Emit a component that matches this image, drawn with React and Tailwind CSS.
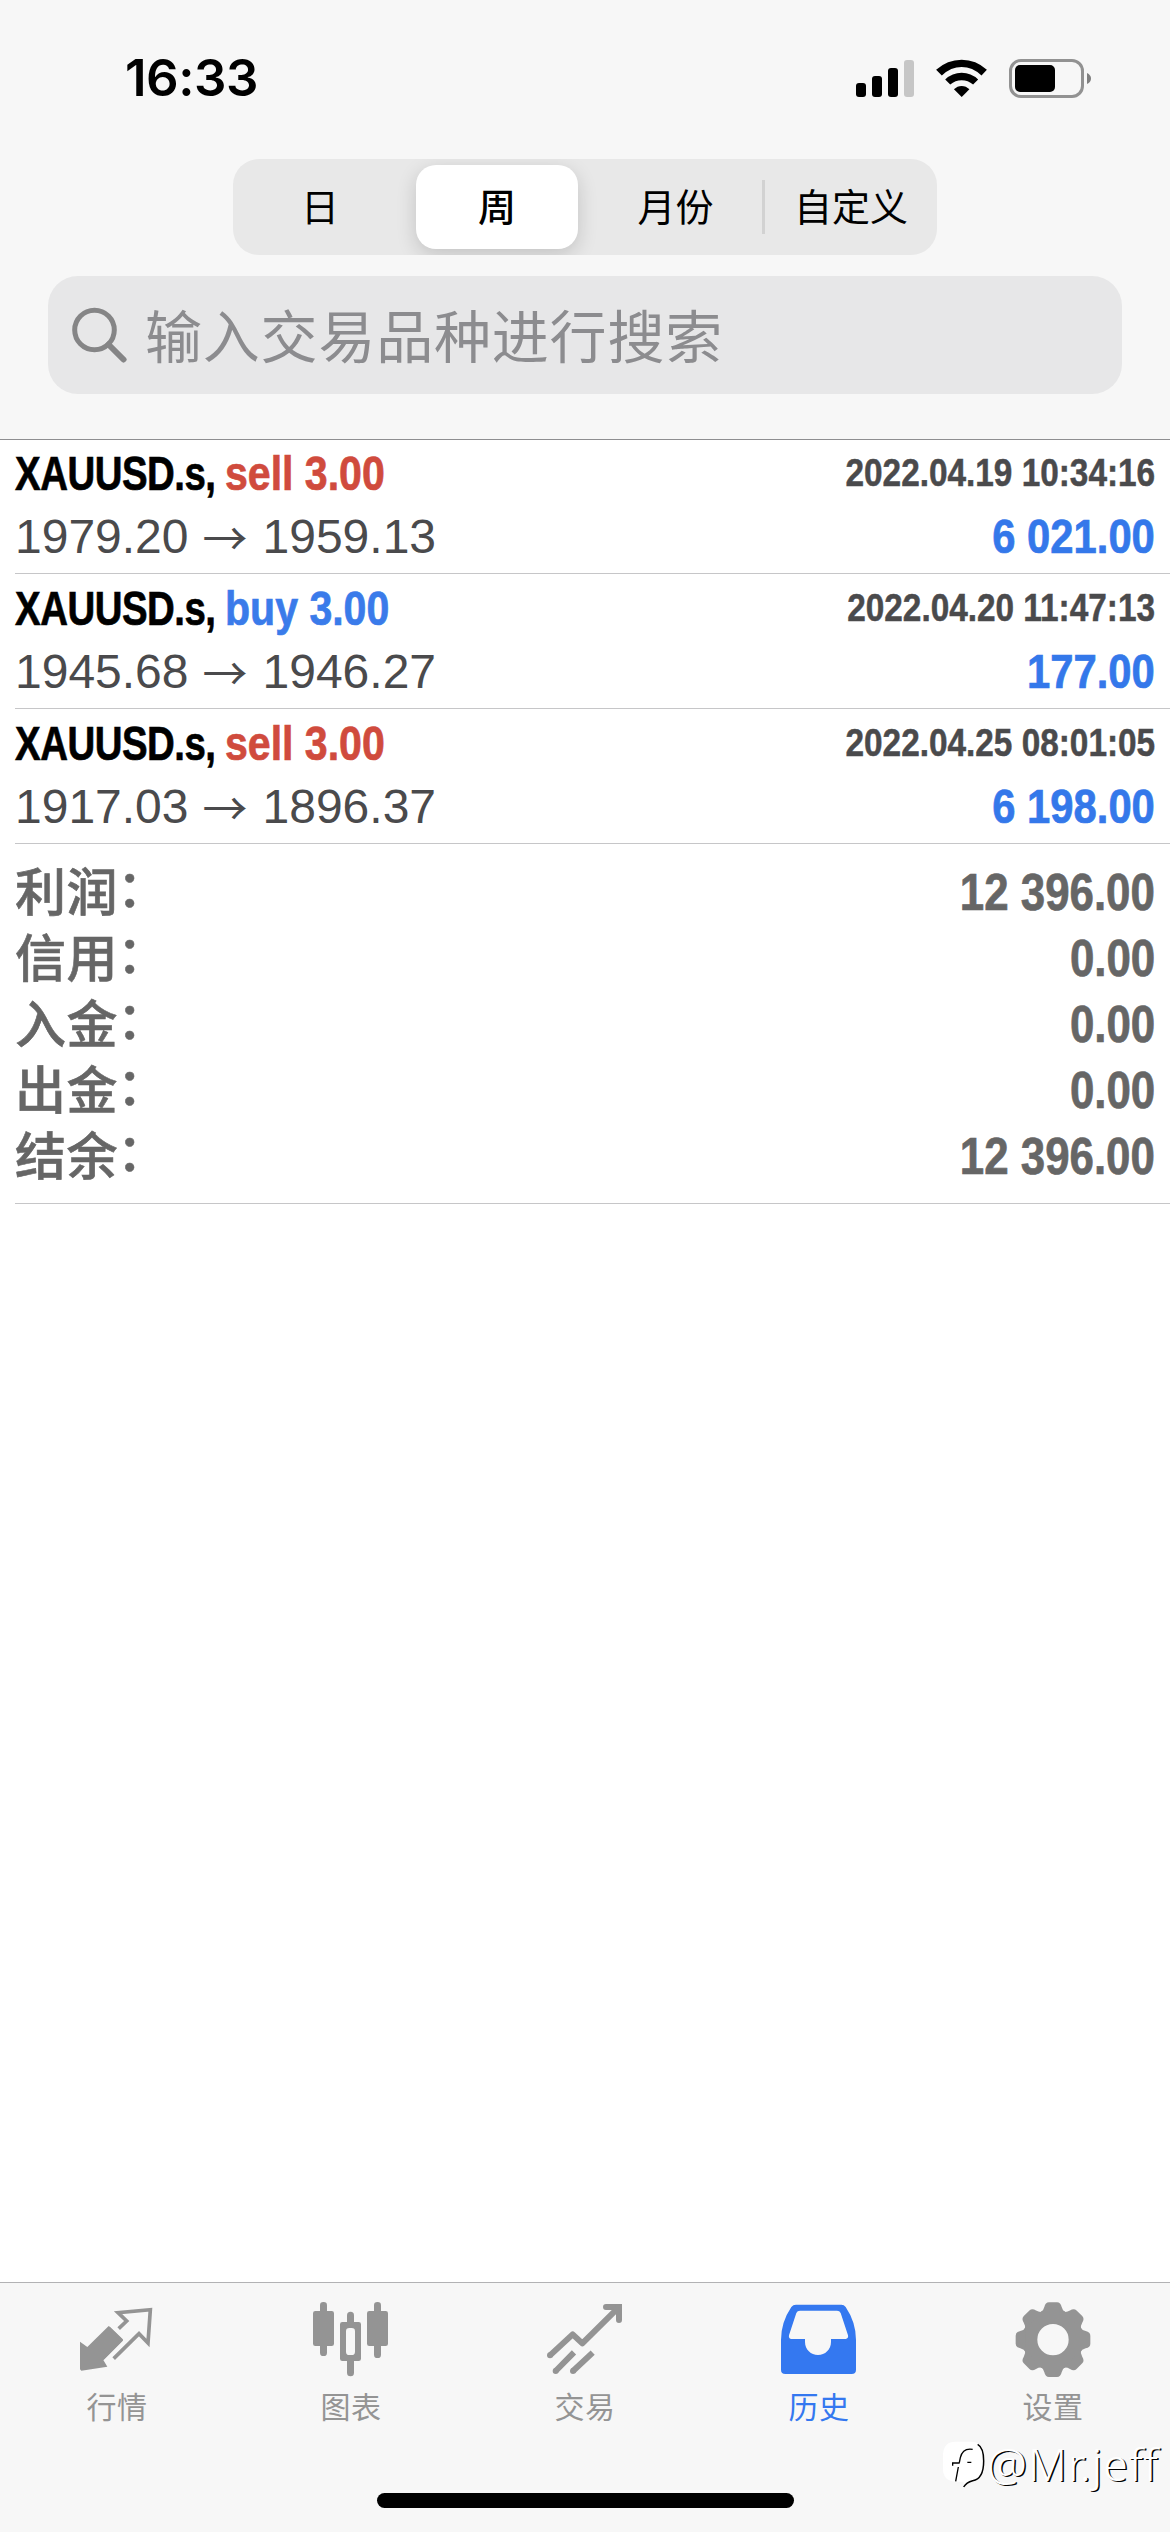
import React, { useState } from 'react'

const deals = [
  { symbol: 'XAUUSD.s', side: 'sell', volume: '3.00', open: '1979.20', close: '1959.13', time: '2022.04.19 10:34:16', profit: '6 021.00' },
  { symbol: 'XAUUSD.s', side: 'buy', volume: '3.00', open: '1945.68', close: '1946.27', time: '2022.04.20 11:47:13', profit: '177.00' },
  { symbol: 'XAUUSD.s', side: 'sell', volume: '3.00', open: '1917.03', close: '1896.37', time: '2022.04.25 08:01:05', profit: '6 198.00' },
]

const totals = [
  { label: '利润', value: '12 396.00' },
  { label: '信用', value: '0.00' },
  { label: '入金', value: '0.00' },
  { label: '出金', value: '0.00' },
  { label: '结余', value: '12 396.00' },
]

const QuotesIcon = () => (
  <svg className="w-20 h-20" viewBox="231 90 240 240" fill="none" stroke="currentColor">
    <path d="M326 168 L369 210 L310 270 L322 290 L244 302 L240 298 L240 215 L262 231 Z" fill="currentColor" stroke="none" />
    <path d="M326 172 L365 210 L308 267" strokeWidth="8" strokeLinejoin="round" />
    <path d="M356 176 L380 153 L354 128 L451 119 L444 219 L417 191 L341 266" strokeWidth="11" />
  </svg>
)

const ChartsIcon = () => (
  <svg className="w-20 h-20" viewBox="933 90 240 240" fill="currentColor">
    <rect x="960" y="96" width="21" height="162" rx="10" />
    <rect x="939" y="123" width="63" height="105" rx="7" />
    <rect x="1122" y="96" width="21" height="168" rx="10" />
    <rect x="1101" y="123" width="63" height="105" rx="7" />
    <path d="M1041 160V136a10 10 0 0 1 21 0V160Z" />
    <path d="M1041 270V308a10 10 0 0 0 21 0V270Z" />
    <path fillRule="evenodd" d="M1027 156H1076a7 7 0 0 1 7 7V266a7 7 0 0 1-7 7H1027a7 7 0 0 1-7-7V163a7 7 0 0 1 7-7ZM1048 174a10 10 0 0 0-10 10V245a10 10 0 0 0 10 10H1055a10 10 0 0 0 10-10V184a10 10 0 0 0-10-10Z" />
  </svg>
)

const TradeIcon = () => (
  <svg className="w-20 h-20" viewBox="435 90 240 240" fill="none" stroke="currentColor" strokeWidth="18">
    <path d="M450 256 L518 193 L547 220 L656 112" strokeLinejoin="round" />
    <path d="M618 111 H657 V150" strokeLinecap="round" />
    <path d="M648 102H660a6 6 0 0 1 6 6V120H640Z" fill="currentColor" stroke="none" />
    <path d="M467 303 L522 247 M519 303 L578 248" />
    <g fill="currentColor" stroke="none">
      <circle cx="450" cy="256" r="9" />
      <circle cx="467" cy="303" r="9" />
      <circle cx="519" cy="303" r="9" />
    </g>
  </svg>
)

const HistoryIcon = () => (
  <svg className="w-20 h-20" viewBox="27 90 240 240" fill="currentColor">
    <path fillRule="evenodd" d="M78 104H214Q222 104 227 111Q258 157 258 210V299Q258 312 245 312H46Q33 312 33 299V210Q33 157 64 111Q69 104 78 104ZM90 122Q82 122 79 129L57 196Q55 207 65 207H105V216C105 239 123 255 144 255C165 255 183 239 183 216V207H227Q236 206 234 196L212 129Q209 122 201 122Z" />
  </svg>
)

const SettingsIcon = () => (
  <svg className="w-20 h-20" viewBox="-120 -119 240 240" fill="none">
    <circle r="69" stroke="currentColor" strokeWidth="44" />
    <g fill="currentColor">
      {[0, 45, 90, 135, 180, 225, 270, 315].map((angle) => (
        <path key={angle} transform={`rotate(${angle})`} d="M-37 -82Q-29 -86 -26 -98Q-23 -112 -12 -112H12Q23 -112 26 -98Q29 -86 37 -82Z" />
      ))}
    </g>
  </svg>
)

const tabs = [
  { label: '行情', icon: QuotesIcon },
  { label: '图表', icon: ChartsIcon },
  { label: '交易', icon: TradeIcon },
  { label: '历史', icon: HistoryIcon },
  { label: '设置', icon: SettingsIcon },
]

const StatusBar = () => (
  <div className="flex items-center justify-between h-[156px] pl-[125px] pr-[78px]">
    <div className="font-['Inter'] font-semibold text-[51px] tracking-[-0.5px]">16:33</div>
    <div className="flex items-center">
      <svg className="w-[58px] h-[38px]" viewBox="0 0 58 38">
        <rect x="0" y="24" width="10" height="14" rx="3" />
        <rect x="16" y="17" width="10" height="21" rx="3" />
        <rect x="32" y="9" width="10" height="29" rx="3" />
        <rect x="48" y="1" width="10" height="37" rx="3" fill="#c6c6c6" />
      </svg>
      <svg className="w-[51px] h-[38px] ml-[22px]" viewBox="289 55 151 113">
        <path d="M289 87 Q322 57 365 57 Q408 57 440 87 L424 104 Q397 79 365 79 Q333 79 306 104Z" />
        <path d="M316 116 Q337 96 365 96 Q393 96 414 116 L399 131 Q384 118 365 118 Q346 118 331 131Z" />
        <path d="M342 145 Q352 135 365 135 Q378 135 388 145 L365 168Z" />
      </svg>
      <svg className="w-[83px] h-[39px] ml-[22px]" viewBox="0 0 83 39">
        <rect x="1.5" y="1.5" width="72" height="36" rx="10.5" fill="none" stroke="#929292" strokeWidth="3" />
        <rect x="6" y="6" width="40" height="27" rx="5" />
        <path d="M78 14 Q82 16 82 19.500 Q82 23 78 25Z" fill="#808080" />
      </svg>
    </div>
  </div>
)

const Deal = ({ deal }) => (
  <div className="h-[135px] ml-[15px] pr-[15px] pt-[3px] border-b border-[#c6c6c8] leading-[63px] whitespace-nowrap">
    <div className="flex justify-between h-[63px] font-bold text-[48px]">
      <div className="flex [-webkit-text-stroke:0.7px]">
        <div className="w-[210px]">
          <span className="inline-block origin-left scale-x-[0.8] tracking-[-0.6px]">{deal.symbol},</span>
        </div>
        <span className={`inline-block origin-left scale-x-[0.855] ${deal.side === 'buy' ? 'text-[#3a7bea]' : 'text-[#d04b3d]'}`}>
          {deal.side} {deal.volume}
        </span>
      </div>
      <span className="inline-block origin-right scale-x-[0.855] -mt-px text-[39px] text-[#4a4a4c] [-webkit-text-stroke:0.5px]">{deal.time}</span>
    </div>
    <div className="flex justify-between h-[63px] text-[48px]">
      <div className="flex text-[#4a4a4c]">
        <span>{deal.open}</span>
        <span className="ml-[14px] mr-[15px] text-[45px] font-['Noto_Sans_CJK_SC',sans-serif]">→</span>
        <span>{deal.close}</span>
      </div>
      <span className="inline-block origin-right scale-x-[0.87] font-bold text-[#3478ea] [-webkit-text-stroke:0.7px]">{deal.profit}</span>
    </div>
  </div>
)

const App = () => {
  const [activeTab, setActiveTab] = useState('历史')

  return (
    <div className="relative flex flex-col w-[1170px] h-[2532px] bg-white text-black font-['Liberation_Sans','Noto_Sans_CJK_SC',sans-serif] overflow-hidden">
      <header className="h-[440px] shrink-0 bg-[#f7f7f7] border-b border-[#8e8e90]">
        <StatusBar />
        <div className="flex items-center w-[704px] h-24 mt-[3px] ml-[233px] rounded-[26px] bg-[#e8e8e8] text-[38px] font-['Noto_Sans_CJK_SC',sans-serif] overflow-hidden">
          <button className="w-[174px] pb-1.5">日</button>
          <button className="w-[162px] h-[84px] ml-[9px] pb-1.5 rounded-[20px] bg-white font-medium shadow-[0_6px_20px_rgba(0,0,0,0.16)]">周</button>
          <button className="w-[183px] ml-px pl-[10px] pb-1.5">月份</button>
          <div className="w-[3px] h-[54px] bg-[#d2d2d2]" />
          <button className="flex-1 pb-1.5">自定义</button>
        </div>
        <div className="flex items-center h-[118px] mt-[21px] mx-12 pl-6 rounded-[30px] bg-[#e7e7e8]">
          <svg className="w-[56px] h-[56px]" viewBox="0 0 56 56" fill="none" stroke="#858586" strokeWidth="5">
            <circle cx="22.500" cy="23" r="19.800" />
            <path d="M36.500 37.500 L51.500 52.500" strokeWidth="6" strokeLinecap="round" />
          </svg>
          <span className="ml-[17px] pb-1 text-[57px] leading-[80px] tracking-[0.8px] text-[#8c8c8f] font-['Noto_Sans_CJK_SC',sans-serif]">输入交易品种进行搜索</span>
        </div>
      </header>

      <main className="flex-1 -mt-px">
        {deals.map((deal) => <Deal key={deal.time} deal={deal} />)}
        <div className="h-[360px] ml-[15px] pr-[15px] pt-4 border-b border-[#c6c6c8] font-bold text-[51px] leading-[66px] text-[#666666]">
          {totals.map((row) => (
            <div key={row.label} className="flex justify-between h-[66px]">
              <div className="flex pt-px font-medium [-webkit-text-stroke:0.6px]">
                <span className="tracking-[0.5px]">{row.label}</span>
                <span className="-ml-px -mt-1">：</span>
              </div>
              <span className="inline-block origin-right scale-x-[0.86] [-webkit-text-stroke:0.7px]">{row.value}</span>
            </div>
          ))}
        </div>
      </main>

      <footer className="h-[250px] shrink-0 bg-[#f7f7f7] border-t border-[#b2b2b4]">
        <nav className="flex pt-[17px]">
          {tabs.map(({ label, icon: Icon }) => (
            <button
              key={label}
              onClick={() => setActiveTab(label)}
              className={`flex flex-col items-center w-[234px] ${activeTab === label ? 'text-[#3478f0]' : 'text-[#949494]'}`}
            >
              <Icon />
              <span className="mt-[3px] text-[30px] leading-[44px] tracking-[0.5px] font-['Noto_Sans_CJK_SC',sans-serif]">{label}</span>
            </button>
          ))}
        </nav>
        <div className="w-[417px] h-[15px] mt-[66px] ml-[377px] rounded-full bg-black" />
      </footer>

      {/* author mark over the tab bar */}
      <div className="absolute right-[11px] bottom-[38px] flex items-center h-[60px]">
        <svg className="w-[46px] h-[50px]" viewBox="32 42 138 150" fill="none">
          <path d="M75 50H122Q156 50 160 85V130Q158 168 118 170L100 186V170H75Q38 168 38 132V88Q40 50 75 50Z" fill="#fff" />
          <path d="M127 73Q97 68 90 98L87 113M67 122V114H88M111 112H123M84 126L76 169" stroke="#000" strokeWidth="4" />
          <path d="M142 58Q160 68 160 108Q160 162 127 167Q108 172 100 186" stroke="#000" strokeWidth="4.5" />
        </svg>
        <span className="text-[44.500px] font-light leading-[60px] tracking-[1.2px] text-white font-['Noto_Sans','Open_Sans',sans-serif] [text-shadow:1.5px_1px_0_#000]">@Mr.jeff</span>
      </div>
    </div>
  )
}

export default App
